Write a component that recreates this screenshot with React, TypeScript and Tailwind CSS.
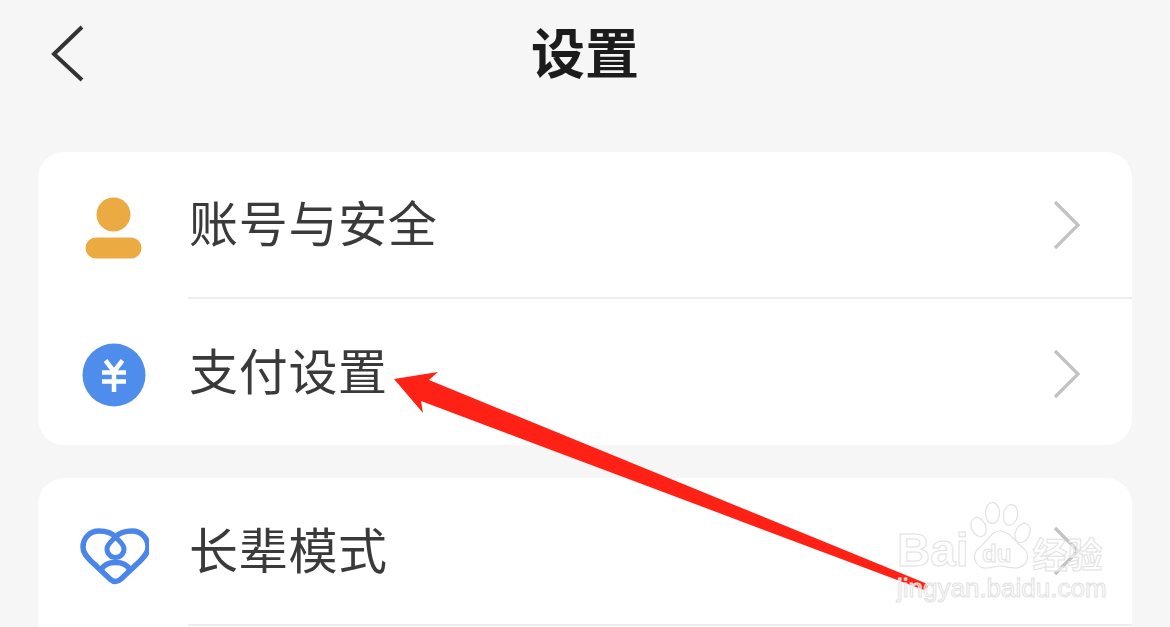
const font = { fontFamily: '"Noto Sans CJK SC", "Noto Sans", sans-serif' };

function Chevron({ className = "" }: { className?: string }) {
  return (
    <svg width="30" height="52" viewBox="0 0 30 52" fill="none" className={`shrink-0 ${className}`}>
      <path d="M3 3 L26 26 L3 49" stroke="#c2c2c2" strokeWidth="3.2" />
    </svg>
  );
}

function PersonIcon() {
  return (
    <svg width="70" height="70" viewBox="0 0 70 70">
      <circle cx="34.5" cy="24.5" r="17" fill="#ecaa42" />
      <rect x="6.5" y="47.5" width="56" height="21" rx="10.5" fill="#ecaa42" />
    </svg>
  );
}

function YenIcon() {
  return (
    <svg width="70" height="70" viewBox="0 0 70 70" fill="none">
      <circle cx="35" cy="38" r="31.5" fill="#4f8ded" />
      <path
        d="M26.5 23.5 L35 34.5 L43.5 23.5 M23 35.5 H47 M23 44.5 H47 M35 34.5 V55"
        stroke="#fff"
        strokeWidth="4.5"
      />
    </svg>
  );
}

function HeartIcon() {
  return (
    <svg width="70" height="70" viewBox="0 0 70 70" fill="none" stroke="#4a86ea" strokeWidth="5.5" strokeLinejoin="round">
      <path d="M36.5 21 C32 16 26 15 20 15 C10 15 4 23 4 31 C4 38 9 42 13 46 L31 63 Q36.5 68 42 63 L60 46 C64 42 69 38 69 31 C69 23 63 15 53 15 C47 15 41 16 36.5 21 Z" />
      <path d="M36.5 21 C41 26 45 28 45 33 A8.5 8.5 0 0 1 28 33 C28 28 32 26 36.5 21 Z" strokeWidth="5" />
      <path d="M22 54 C27 44 46 44 51 54" />
    </svg>
  );
}

function Row({
  icon,
  label,
  h,
  chevronClass,
}: {
  icon: React.ReactNode;
  label: string;
  h: string;
  chevronClass?: string;
}) {
  return (
    <div className={`flex items-center pr-[50px] ${h}`}>
      <div className="flex w-[151px] shrink-0 justify-center">{icon}</div>
      <span className="flex-1 pb-[8px] text-[49px] leading-none tracking-[0.7px] text-[#3a3a3a]">{label}</span>
      <Chevron className={chevronClass} />
    </div>
  );
}

function Watermark() {
  const outline = "text-white/60 [-webkit-text-stroke:1px_#e2e2e2]";
  return (
    <div className="pointer-events-none absolute left-[897px] top-[502px] flex w-[212px] flex-col">
      <div className="flex h-[73px] items-end">
        <span className={`text-[46px] font-bold leading-[50px] ${outline}`} style={{ fontFamily: '"Liberation Sans", sans-serif' }}>
          Bai
        </span>
        <svg width="64" height="73" viewBox="0 0 64 73" fill="#fff" stroke="#e2e2e2" strokeWidth="1.2" className="shrink-0 self-start">
          <ellipse cx="9.5" cy="25" rx="7" ry="10" transform="rotate(-25 9.5 25)" />
          <ellipse cx="23.5" cy="11" rx="7" ry="10.5" />
          <ellipse cx="41.5" cy="13" rx="7" ry="10.5" transform="rotate(10 41.5 13)" />
          <ellipse cx="53.5" cy="31" rx="7" ry="10" transform="rotate(25 53.5 31)" />
          <path d="M31 29 C22 29 19 39 11 45 C1 53 6 67 18 66 C25 65 27 64 31 64 C36 64 39 66 46 66 C58 66 63 53 53 45 C45 39 41 29 31 29 Z" />
        </svg>
        <span className={`text-[35px] font-bold leading-[44px] ${outline}`}>经验</span>
      </div>
      <span
        className="absolute left-[85px] top-[40px] text-[24px] font-bold leading-none text-white [-webkit-text-stroke:1px_#e2e2e2]"
        style={{ fontFamily: '"Liberation Sans", sans-serif' }}
      >
        du
      </span>
      <span
        className={`text-[26px] leading-[26px] whitespace-nowrap ${outline}`}
        style={{ fontFamily: '"Liberation Sans", sans-serif' }}
      >
        jingyan.baidu.com
      </span>
    </div>
  );
}

function Arrow() {
  return (
    <svg width="1170" height="627" viewBox="0 0 1170 627" className="pointer-events-none absolute left-0 top-0">
      <path d="M394 379 L438 372 L429 380 L925 583 Q931 586 924 590 L421 401 L423 413 Z" fill="#ff2115" />
    </svg>
  );
}

export default function App() {
  return (
    <div className="relative h-[627px] w-[1170px] overflow-hidden bg-[#f6f6f6]" style={font}>
      <header className="relative flex h-[152px] justify-center pt-[21px]">
        <svg width="36" height="59" viewBox="0 0 36 59" fill="none" className="absolute left-[49px] top-[24px]">
          <path d="M33 3 L5 30 L33 56" stroke="#333" strokeWidth="4" />
        </svg>
        <h1 className="text-[54px] font-bold leading-[60px] text-[#1c1c1c]">设置</h1>
      </header>

      <section className="mx-[38px] rounded-[26px] bg-white">
        <Row icon={<PersonIcon />} label="账号与安全" h="h-[145px]" />
        <div className="ml-[150px] h-[2px] bg-[#eeeeee]" />
        <Row icon={<YenIcon />} label="支付设置" h="h-[146px]" chevronClass="mt-[4px]" />
      </section>

      <section className="mx-[38px] mt-[33px] rounded-t-[26px] bg-white">
        <Row icon={<HeartIcon />} label="长辈模式" h="h-[146px]" />
        <div className="ml-[150px] h-[2px] bg-[#eeeeee]" />
        <div className="h-[40px]" />
      </section>

      <Arrow />
      <Watermark />
    </div>
  );
}
